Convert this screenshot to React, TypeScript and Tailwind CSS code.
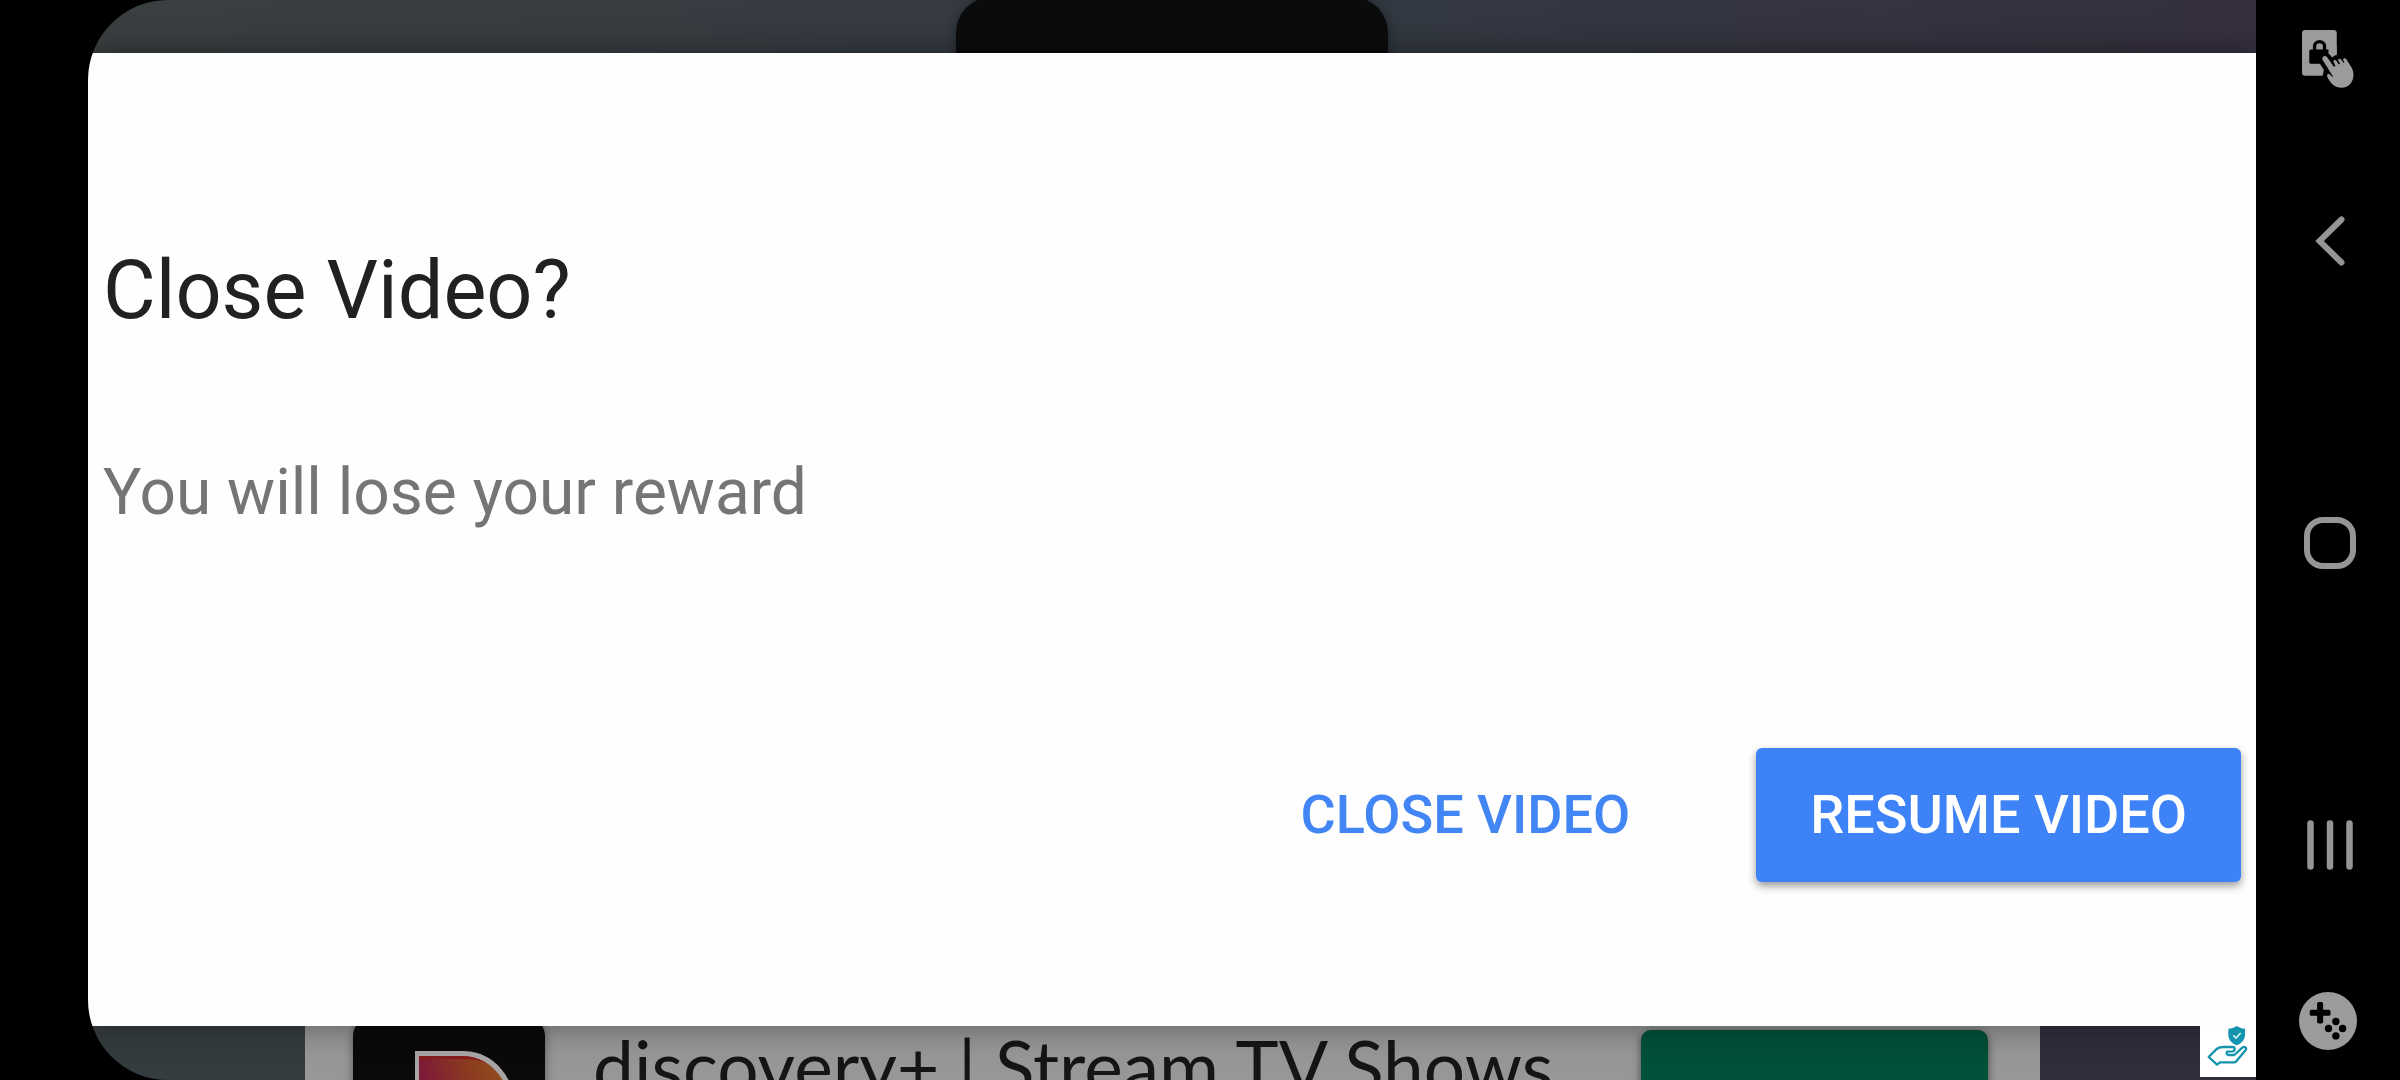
function LockTouchIcon() {
  return (
    <svg viewBox="96 90 157 175" className="h-[58px] w-[52px]" aria-hidden="true">
      <rect x="96" y="90" width="105" height="138" rx="10" fill="#9b9b9b" />
      <rect x="118" y="149" width="62" height="43" rx="5" fill="#000" />
      <path d="M134 152v-13a15 14 0 0 1 30 0v13" fill="none" stroke="#000" strokeWidth="10" />
      <path d="M146 186 L162 210 L158 230 L210 240 L210 160 L190 174 L176 150 Z" fill="#000" />
      <path d="M176 140h25v26l-12 9-13-15z" fill="#9b9b9b" />
      <path d="M201 164v20h-24l8-10z" fill="#000" />
      <path
        d="M158 180c-4-8 7-17 14-8l20 29 5-2-6-13c-1-5 6-7 9-3l7 11 4-2-6-11c0-5 7-6 9-2l7 10 3-1-4-8c0-5 7-6 10-2l16 26c14 26 0 60-31 60-19 0-32-10-43-34-2-6 4-11 8-6l8 8 2-1z"
        fill="#9b9b9b"
      />
    </svg>
  );
}

function BackIcon() {
  return (
    <svg viewBox="0 0 30 50" className="h-[50px] w-[30px]" aria-hidden="true">
      <path d="M26.500 3.500L4.500 25L26.500 46.500" fill="none" stroke="#959595" strokeWidth="6" strokeLinecap="round" />
    </svg>
  );
}

function HomeIcon() {
  return (
    <svg viewBox="0 0 52 52" className="size-[52px]" aria-hidden="true">
      <rect x="3" y="3" width="46" height="46" rx="16" fill="none" stroke="#959595" strokeWidth="6" />
    </svg>
  );
}

function RecentsIcon() {
  return (
    <svg viewBox="0 0 46 50" className="h-[50px] w-[46px]" aria-hidden="true">
      <path d="M3.500 3.500v43M23 3.500v43M42.500 3.500v43" stroke="#959595" strokeWidth="6.500" strokeLinecap="round" />
    </svg>
  );
}

function GameIcon() {
  return (
    <svg viewBox="88 66 173 173" className="size-[58px]" aria-hidden="true">
      <circle cx="174.500" cy="152.500" r="86.500" fill="#9b9b9b" />
      <rect x="142" y="96" width="18" height="64" rx="5" />
      <rect x="120" y="119" width="62" height="18" rx="5" />
      <circle cx="198" cy="154" r="11" />
      <circle cx="176" cy="175" r="11" />
      <circle cx="218" cy="175" r="11" />
      <circle cx="198" cy="197" r="11" />
    </svg>
  );
}

function AdBadgeIcon() {
  return (
    <svg viewBox="60 48 165 153" className="h-[51px] w-[55px]" aria-hidden="true">
      <path d="M145 56c10 0 18-3 25-8 8 5 16 8 25 8v18c0 14-9 25-25 32-16-7-25-18-25-32z" fill="#1494ae" />
      <path d="M160 76l8 8 14-15" fill="none" stroke="#d5f1f5" strokeWidth="5" />
      <path
        d="M86 141l22-22c6-6 13-8 22-8h28c8 0 8 12 0 13l-17 1c-3 6 0 10 6 10h16l24-22c7-6 14 1 10 7l-28 34c-4 4-7 3-11 3h-38l-9 7z"
        fill="none"
        stroke="#1494ae"
        strokeWidth="7"
        strokeLinejoin="round"
      />
    </svg>
  );
}

function DiscoveryLogo() {
  return (
    <svg viewBox="0 0 192 54" className="h-full w-full" aria-hidden="true">
      <defs>
        <linearGradient id="logo-fill" x1="0" x2="1" y1="0.200" y2="0">
          <stop offset="0" stopColor="#7d1a38" />
          <stop offset="0.500" stopColor="#8b3b20" />
          <stop offset="1" stopColor="#95551c" />
        </linearGradient>
      </defs>
      <path d="M62 25h48c28 0 49 22 53 54H62z" fill="#a9a5a7" />
      <path d="M66 30h43c26 0 45 20 49 49H66z" fill="url(#logo-fill)" />
      <path d="M66 30h43c10 0 19 3 26 8-8-4-15-5-24-5H66z" fill="#851b1c" />
    </svg>
  );
}

function SystemBar() {
  const key = "flex w-full items-center justify-center";
  return (
    <nav aria-label="System navigation" className="flex w-36 shrink-0 flex-col justify-between bg-black pt-[15px] pb-[22px]">
      <button type="button" aria-label="Touch lock" className={`${key} h-[88px]`}>
        <LockTouchIcon />
      </button>
      <div className="flex flex-col gap-[202px] pb-[2px] pl-[3px]">
        <button type="button" aria-label="Back" className={`${key} h-[100px]`}>
          <BackIcon />
        </button>
        <button type="button" aria-label="Home" className={`${key} h-[100px]`}>
          <HomeIcon />
        </button>
        <button type="button" aria-label="Recent apps" className={`${key} h-[100px]`}>
          <RecentsIcon />
        </button>
      </div>
      <button type="button" aria-label="Game tools" className={`${key} h-[74px]`}>
        <GameIcon />
      </button>
    </nav>
  );
}

export default function App() {
  return (
    <div className="flex h-screen overflow-hidden bg-black pl-[88px] font-['Roboto',sans-serif]">
      <main className="flex min-w-0 flex-1 flex-col overflow-hidden rounded-l-[80px]">
        <div className="flex h-[53px] shrink-0 justify-center overflow-hidden bg-linear-to-r from-[#3a3f40] via-[#333942] via-60% to-[#352f3e]">
          <div className="-mt-[3px] h-20 w-[432px] rounded-t-[36px] bg-[#0b0b0d] shadow-[0_0_12px_#0006]" />
        </div>

        <section
          role="dialog"
          aria-labelledby="dialog-title"
          className="relative flex flex-1 flex-col bg-[#fefefe] px-[15px] pt-[190px] pb-[144px] shadow-[0_0_32px_#0006]"
        >
          <h1 id="dialog-title" className="text-[81px] leading-[95px] text-[#212121]">
            Close Video?
          </h1>
          <p className="mt-[117px] text-[64px] leading-[75px] text-[#757575]">You will lose your reward</p>
          <div className="mt-auto flex justify-end gap-[70px] text-[54px] leading-[134px] font-medium">
            <button type="button" className="px-14 text-[#4285f4]">
              CLOSE VIDEO
            </button>
            <button type="button" className="rounded-md bg-[#3e82f7] px-[54px] text-white shadow-[0_4px_8px_#0006]">
              RESUME VIDEO
            </button>
          </div>
        </section>

        <div className="flex h-[54px] shrink-0 overflow-hidden">
          <div className="w-[217px] shrink-0 bg-[#353c3f]" />
          <div className="flex min-w-0 flex-1 items-start bg-[#979797] pr-[52px] pl-12">
            <div className="-mt-2 h-20 w-48 shrink-0 overflow-hidden rounded-t-[18px] bg-[#0a0a0c] pt-2 shadow-[0_0_10px_#0006]">
              <div className="h-[54px]">
                <DiscoveryLogo />
              </div>
            </div>
            <p className="min-w-0 flex-1 pl-12 font-['Lato',sans-serif] text-[73px] leading-[80px] whitespace-nowrap text-[#141517]">
              discovery+ | Stream TV Shows
            </p>
            <button
              type="button"
              aria-label="Install"
              className="mt-1 h-20 w-[347px] shrink-0 rounded-[10px] bg-[#015039] shadow-[0_2px_8px_#0008]"
            />
          </div>
          <div className="flex w-[216px] shrink-0 justify-end bg-[#302e3b]">
            <a href="#ad-choices" aria-label="Ad choices" className="relative z-10 h-[51px] w-14 bg-white">
              <AdBadgeIcon />
            </a>
          </div>
        </div>
      </main>
      <SystemBar />
    </div>
  );
}
